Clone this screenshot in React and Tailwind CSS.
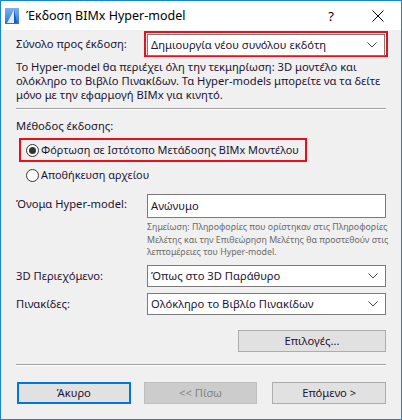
import React from 'react';

function Chevron() {
  return (
    <svg width="10" height="6" viewBox="0 0 10 6" className="shrink-0">
      <path d="M0.5 0.5 L5 5 L9.5 0.5" fill="none" stroke="#444" strokeWidth="1" />
    </svg>
  );
}

function Select({ value }) {
  return (
    <div className="h-[22px] flex items-center justify-between bg-white border border-[#7a7a7a] pl-[3px] pr-[7px]">
      <span className="whitespace-nowrap">{value}</span>
      <Chevron />
    </div>
  );
}

function Radio({ checked, label }) {
  return (
    <div className="flex items-center gap-[2px]">
      <span className="w-[13px] h-[13px] rounded-full border border-[#333] bg-white flex items-center justify-center">
        {checked && <span className="w-[7px] h-[7px] rounded-full bg-[#333]" />}
      </span>
      <span className="whitespace-nowrap text-[10.9px]">{label}</span>
    </div>
  );
}

function Button({ children, className = '' }) {
  return (
    <div className={`h-[22px] flex items-center justify-center border ${className}`}>
      {children}
    </div>
  );
}

export default function App() {
  return (
    <div
      className="w-[402px] h-[420px] bg-[#f0f0f0] border border-[#1883d7] text-[11.2px] leading-[16px] text-[#1c1433] overflow-hidden"
      style={{ fontFamily: '"Noto Sans", "Open Sans", sans-serif' }}
    >
      {/* title bar */}
      <div className="h-[29px] bg-white flex items-center">
        <svg width="14" height="16" viewBox="0 0 14 16" className="ml-[4px] mr-[7px]">
          <defs>
            <linearGradient id="g" x1="0" y1="0" x2="0" y2="1">
              <stop offset="0" stopColor="#7fb2ee" />
              <stop offset="1" stopColor="#2a6fd6" />
            </linearGradient>
          </defs>
          <rect x="0" y="0" width="14" height="16" fill="url(#g)" />
          <path d="M2 15 L9 2 L9 15 Z" fill="#dfeeff" />
          <path d="M9 2 L12 15 L9 15 Z" fill="#1a57c0" />
        </svg>
        <span className="text-[12.5px] text-black">Έκδοση BIMx Hyper-model</span>
        <span className="ml-auto mr-[38px] text-[13px] text-black">?</span>
        <svg width="12" height="12" viewBox="0 0 12 12" className="mr-[17px]">
          <path d="M0.5 0.5 L11.5 11.5 M11.5 0.5 L0.5 11.5" stroke="#000" strokeWidth="1" />
        </svg>
      </div>

      <div className="px-[15px]">
        <div className="flex items-center mt-[1px]">
          <span className="w-[128px] shrink-0 whitespace-nowrap">Σύνολο προς έκδοση:</span>
          <div className="flex-1 min-w-0 h-[26px] border-2 border-[#e8101a] p-[1px] -mr-[2px]">
            <Select value="Δημιουργία νέου συνόλου εκδότη" />
          </div>
        </div>

        <p className="mt-[3px] leading-[14px] whitespace-nowrap">
          Το Hyper-model θα περιέχει όλη την τεκμηρίωση: 3D μοντέλο και<br />
          ολόκληρο το Βιβλίο Πινακίδων. Τα Hyper-models μπορείτε να τα δείτε<br />
          μόνο με την εφαρμογή BIMx για κινητό.
        </p>

        <div className="mt-[6px] h-[2px] border-t border-[#a0a0a0] border-b border-b-white" />

        <div className="mt-[8px]">Μέθοδος έκδοσης:</div>

        <div className="mt-[4px] ml-[3px] w-[288px] h-[24px] border-2 border-[#e8101a] flex items-center pl-[5px]">
          <Radio checked label="Φόρτωση σε Ιστότοπο Μετάδοσης BIMx Μοντέλου" />
        </div>
        <div className="mt-[5px] ml-[10px]">
          <Radio label="Αποθήκευση αρχείου" />
        </div>

        <div className="mt-[11px] flex">
          <span className="w-[131px] shrink-0 pt-[2px] whitespace-nowrap">Όνομα Hyper-model:</span>
          <div className="flex-1 min-w-0">
            <div className="h-[24px] bg-white border border-[#7a7a7a] flex items-center pl-[3px]">Ανώνυμο</div>
            <p className="mt-[3px] text-[8.8px] leading-[12.5px] text-[#6a6a6a] whitespace-nowrap">
              Σημείωση: Πληροφορίες που ορίστηκαν στις Πληροφορίες<br />
              Μελέτης και την Επιθεώρηση Μελέτης θα προστεθούν στις<br />
              λεπτομέρειες του Hyper-model.
            </p>
          </div>
        </div>

        <div className="mt-[6px] flex items-center">
          <span className="w-[131px] shrink-0">3D Περιεχόμενο:</span>
          <div className="flex-1 min-w-0"><Select value="Όπως στο 3D Παράθυρο" /></div>
        </div>
        <div className="mt-[6px] flex items-center">
          <span className="w-[131px] shrink-0">Πινακίδες:</span>
          <div className="flex-1 min-w-0"><Select value="Ολόκληρο το Βιβλίο Πινακίδων" /></div>
        </div>

        <div className="mt-[15px] flex justify-end">
          <Button className="w-[148px] h-[21px] bg-[#e1e1e1] border-[#adadad]">Επιλογές...</Button>
        </div>

        <div className="mt-[12px] h-[2px] border-t border-[#a0a0a0] border-b border-b-white" />

        <div className="mt-[16px] flex">
          <Button className="w-[114px] ml-[1px] bg-[#e1e1e1] border-2 border-[#0078d7]">Άκυρο</Button>
          <Button className="w-[114px] ml-[13px] bg-[#cccccc] border-[#bfbfbf] text-[#838383]">&lt;&lt; Πίσω</Button>
          <Button className="w-[114px] ml-[15px] bg-[#e1e1e1] border-[#adadad]">Επόμενο &gt;</Button>
        </div>
      </div>
    </div>
  );
}
